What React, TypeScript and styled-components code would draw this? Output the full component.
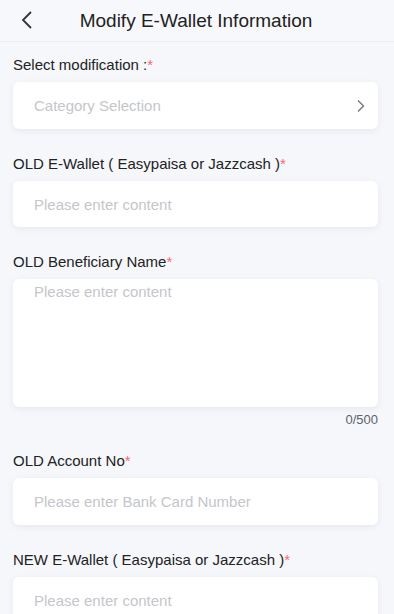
import React from "react";
import styled, { createGlobalStyle } from "styled-components";

const Global = createGlobalStyle`
  html, body { margin: 0; padding: 0; background: #f6f7fb; }
  body { font-family: "Liberation Sans", Arial, sans-serif; }
  * { box-sizing: border-box; }
`;

const Page = styled.div`
  width: 394px;
  min-height: 614px;
  background: #f6f7fb;
`;

const Header = styled.header`
  height: 42px;
  display: flex;
  align-items: center;
  justify-content: center;
  position: relative;
  border-bottom: 1px solid #eceef3;
  background: #f7f8fc;
`;

const BackButton = styled.button`
  position: absolute;
  left: 14px;
  top: 7px;
  width: 26px;
  height: 26px;
  border: 0;
  background: none;
  padding: 0;
  display: flex;
  align-items: center;
  justify-content: center;
`;

const Title = styled.h1`
  margin: 0 0 0 -2px;
  font-size: 19px;
  font-weight: 400;
  color: #222;
`;

const Form = styled.div`
  padding: 13px 16px 0 13px;
  display: flex;
  flex-direction: column;
`;

const Group = styled.div<{ $gap?: number }>`
  display: flex;
  flex-direction: column;
  margin-bottom: ${(p) => p.$gap ?? 25}px;
`;

const Label = styled.div`
  font-size: 15px;
  line-height: 20px;
  color: #222;
  margin-bottom: 7px;
`;

const Star = styled.span`
  color: #f56c6c;
`;

const Box = styled.div<{ $h: number }>`
  height: ${(p) => p.$h}px;
  background: #fff;
  border-radius: 6px;
  box-shadow: 0 2px 6px rgba(120, 130, 160, 0.12);
  display: flex;
  align-items: ${(p) => (p.$h > 60 ? "flex-start" : "center")};
  padding: ${(p) => (p.$h > 60 ? "4px 21px" : "0 12px 0 21px")};
  font-size: 15px;
  color: #c4c6cb;
`;

const Placeholder = styled.span`
  flex: 1;
`;

const Counter = styled.div`
  text-align: right;
  font-size: 13px;
  color: #606266;
  margin-top: 5px;
`;

const Chevron = () => (
  <svg width="10" height="14" viewBox="0 0 10 14">
    <path d="M2 1.5 L7.5 7 L2 12.5" fill="none" stroke="#777" strokeWidth="1.4" />
  </svg>
);

export default function App() {
  return (
    <Page>
      <Global />
      <Header>
        <BackButton>
          <svg width="14" height="20" viewBox="0 0 14 20">
            <path d="M11 2 L3 10 L11 18" fill="none" stroke="#333" strokeWidth="1.8" />
          </svg>
        </BackButton>
        <Title>Modify E-Wallet Information</Title>
      </Header>
      <Form>
        <Group>
          <Label>
            Select modification :<Star>*</Star>
          </Label>
          <Box $h={47}>
            <Placeholder>Category Selection</Placeholder>
            <Chevron />
          </Box>
        </Group>
        <Group>
          <Label>
            OLD E-Wallet ( Easypaisa or Jazzcash )<Star>*</Star>
          </Label>
          <Box $h={46}>
            <Placeholder>Please enter content</Placeholder>
          </Box>
        </Group>
        <Group $gap={24}>
          <Label>
            OLD Beneficiary Name<Star>*</Star>
          </Label>
          <Box $h={128}>
            <Placeholder>Please enter content</Placeholder>
          </Box>
          <Counter>0/500</Counter>
        </Group>
        <Group>
          <Label>
            OLD Account No<Star>*</Star>
          </Label>
          <Box $h={47}>
            <Placeholder>Please enter Bank Card Number</Placeholder>
          </Box>
        </Group>
        <Group>
          <Label>
            NEW E-Wallet ( Easypaisa or Jazzcash )<Star>*</Star>
          </Label>
          <Box $h={47}>
            <Placeholder>Please enter content</Placeholder>
          </Box>
        </Group>
      </Form>
    </Page>
  );
}
